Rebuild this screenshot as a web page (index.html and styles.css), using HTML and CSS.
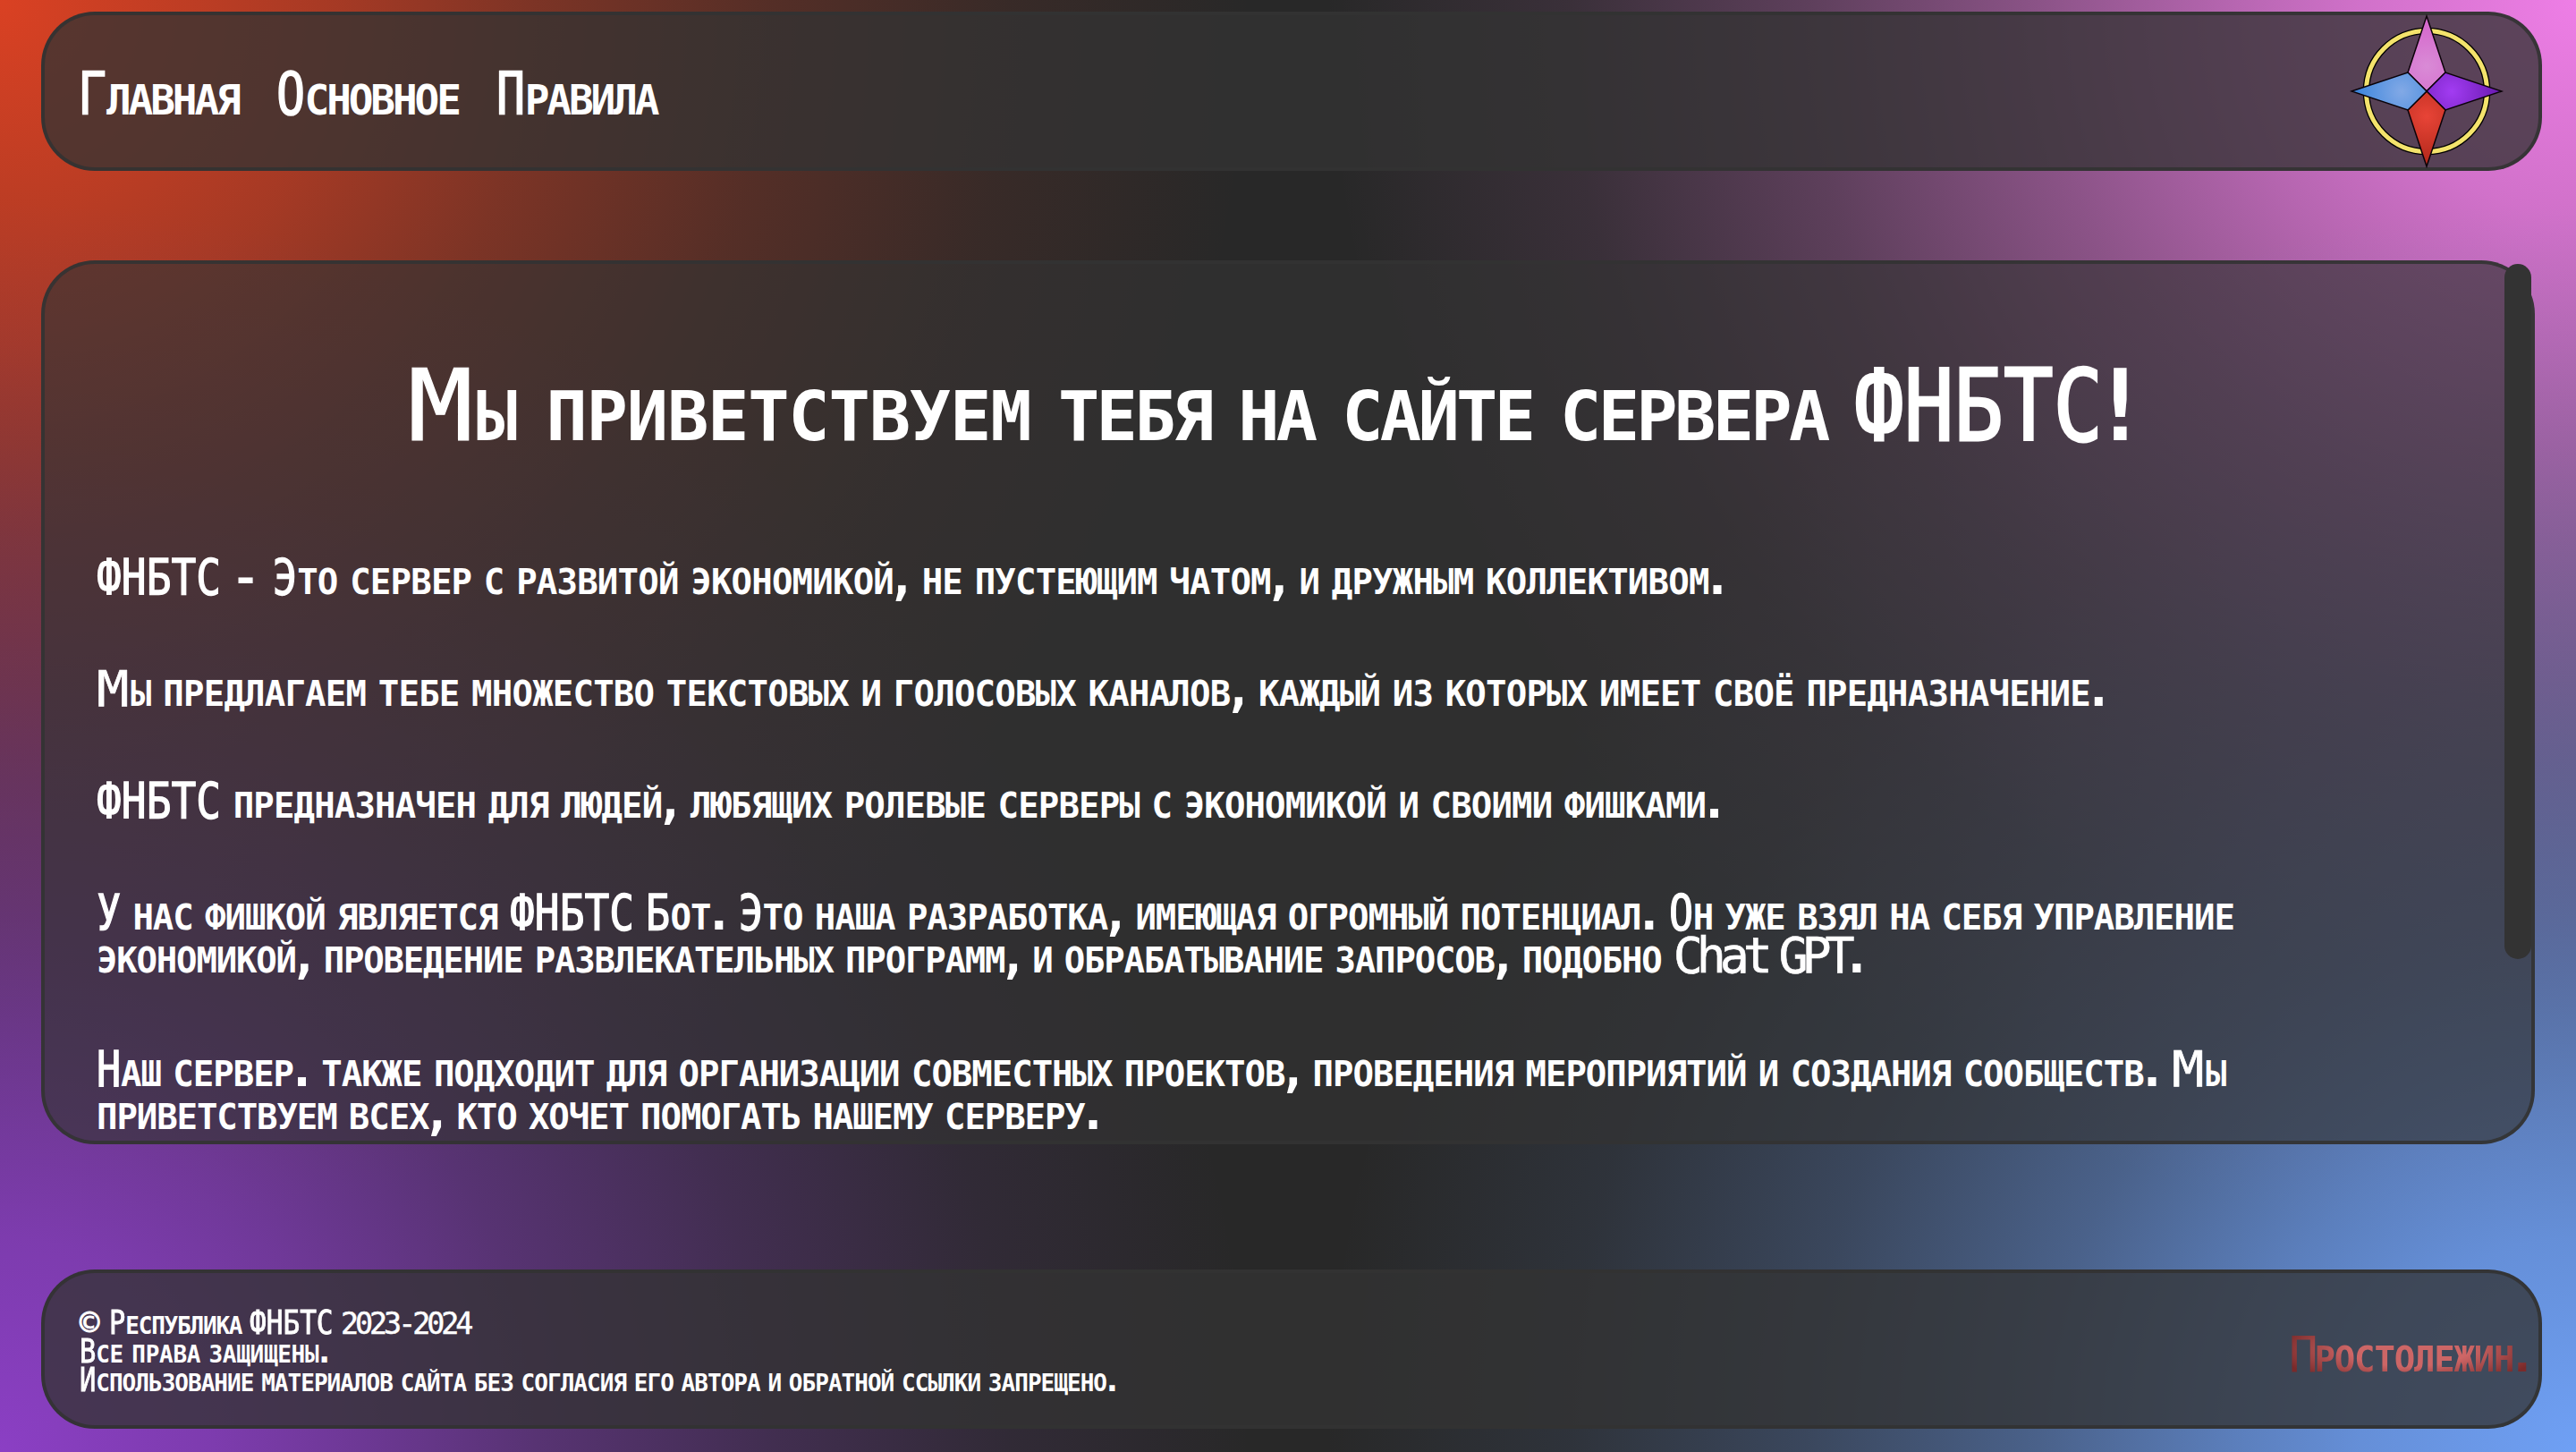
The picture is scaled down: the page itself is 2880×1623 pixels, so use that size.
FILE: index.html
```html
<!DOCTYPE html>
<html lang="ru">
<head>
<meta charset="utf-8">
<title>ФНБТС</title>
<link rel="stylesheet" href="styles.css">
</head>
<body>
<header class="panel header">
  <nav class="nav">
    <a><span class="cap">Г</span>лавная</a>
    <a><span class="cap">О</span>сновное</a>
    <a><span class="cap">П</span>равила</a>
  </nav>
  <svg class="logo" viewBox="-86 -86 172 172">
    <defs>
      <radialGradient id="pink" gradientUnits="userSpaceOnUse" cx="0" cy="-28" r="48"><stop offset="0" stop-color="#d98bd6"/><stop offset="1" stop-color="#d568cc"/></radialGradient>
      <radialGradient id="blue" gradientUnits="userSpaceOnUse" cx="-28" cy="0" r="50"><stop offset="0" stop-color="#82a9e6"/><stop offset="1" stop-color="#3e86dc"/></radialGradient>
      <radialGradient id="violet" gradientUnits="userSpaceOnUse" cx="28" cy="0" r="50"><stop offset="0" stop-color="#a23cf2"/><stop offset="1" stop-color="#6d1cb4"/></radialGradient>
      <radialGradient id="red" gradientUnits="userSpaceOnUse" cx="0" cy="28" r="50"><stop offset="0" stop-color="#e84437"/><stop offset="1" stop-color="#b52a1c"/></radialGradient>
    </defs>
    <circle r="67.5" fill="none" stroke="#000" stroke-width="7.6"/>
    <circle r="67.5" fill="none" stroke="#f4e36c" stroke-width="5"/>
    <g stroke="#0a0208" stroke-width="1.5">
      <path fill="url(#pink)" d="M0-84 21-21 0 0-21-21Z"/>
      <path fill="url(#violet)" d="M84 0 21 21 0 0 21-21Z"/>
      <path fill="url(#red)" d="M0 84-21 21 0 0 21 21Z"/>
      <path fill="url(#blue)" d="M-84 0-21-21 0 0-21 21Z"/>
    </g>
  </svg>
</header>
<main class="panel main">
  <div class="content">
    <h1><span class="lead"><span class="cap wide">М</span>ы приветствуем</span> тебя на сайте сервера <span class="abbr">ФНБТС</span><i>!</i></h1>
    <p><span class="line l1"><span class="abbr">ФНБТС</span> <i class="dash">-</i> <span class="cap">Э</span>то сервер с развитой экономикой<i>,</i> не пустеющим чатом<i>,</i> и дружным коллективом<i>.</i></span></p>
    <p><span class="line l2"><span class="cap wide">М</span>ы предлагаем тебе множество текстовых и голосовых каналов<i>,</i> каждый из которых имеет своё предназначение<i>.</i></span></p>
    <p><span class="line l3"><span class="abbr">ФНБТС</span> предназначен для людей<i>,</i> любящих ролевые серверы с экономикой и своими фишками<i>.</i></span></p>
    <p><span class="line l4"><span class="cap">У</span> нас фишкой является <span class="abbr">ФНБТС</span> <span class="cap">Б</span>от<i>.</i> <span class="cap">Э</span>то наша разработка<i>,</i> имеющая огромный потенциал<i>.</i> <span class="cap">О</span>н уже взял на себя управление</span> <span class="line l5">экономикой<i>,</i> проведение развлекательных программ<i>,</i> и обрабатывание запросов<i>,</i> подобно <span class="latin">Chat GPT</span><i>.</i></span></p>
    <p><span class="line l6"><span class="cap">Н</span>аш сервер<i>.</i> также подходит для организации совместных проектов<i>,</i> проведения мероприятий и создания сообществ<i>.</i> <span class="cap wide">М</span>ы</span> <span class="line l7">приветствуем всех<i>,</i> кто хочет помогать нашему серверу<i>.</i></span></p>
  </div>
  <div class="thumb"></div>
</main>
<footer class="panel footer">
  <div class="legal">
    <div class="line f1"><span class="copy">©</span> <span class="cap">Р</span>еспублика <span class="abbr">ФНБТС</span> <span class="digits">2023-2024</span></div>
    <div class="line"><span class="cap">В</span>се права защищены<i>.</i></div>
    <div class="line f3"><span class="cap">И</span>спользование материалов сайта без согласия его автора и обратной ссылки запрещено<i>.</i></div>
  </div>
  <div class="author"><span>П</span>ростолежин<i>.</i></div>
</footer>
</body>
</html>
```
FILE: styles.css
```css
* { box-sizing: border-box; }
body {
  margin: 0;
  height: 1623px;
  padding: 13px 38px 26px 46px;
  display: flex;
  flex-direction: column;
  overflow: hidden;
  color: #fff;
  font-family: "DejaVu Sans Mono", monospace;
  font-weight: bold;
  font-variant-caps: small-caps;
  background:
    radial-gradient(circle at 0 100%, rgb(139 63 196), rgb(139 63 196 / .86) 240px, rgb(139 63 196 / .72) 380px, rgb(139 63 196 / .48) 600px, rgb(139 63 196 / .26) 860px, rgb(139 63 196 / .09) 1126px, rgb(139 63 196 / 0) 1400px),
    radial-gradient(circle at 100% 100%, rgb(111 160 245), rgb(111 160 245 / .86) 240px, rgb(111 160 245 / .72) 380px, rgb(111 160 245 / .48) 600px, rgb(111 160 245 / .26) 860px, rgb(111 160 245 / .09) 1126px, rgb(111 160 245 / 0) 1400px),
    radial-gradient(circle at 0 0, rgb(218 65 35), rgb(218 65 35 / .82) 240px, rgb(218 65 35 / .7) 380px, rgb(218 65 35 / .47) 600px, rgb(218 65 35 / .25) 860px, rgb(218 65 35 / .09) 1126px, rgb(218 65 35 / 0) 1400px),
    radial-gradient(circle at 100% 0, rgb(238 126 230), rgb(238 126 230 / .85) 240px, rgb(238 126 230 / .72) 380px, rgb(238 126 230 / .5) 600px, rgb(238 126 230 / .27) 860px, rgb(238 126 230 / .09) 1126px, rgb(238 126 230 / 0) 1400px),
    #282828;
}
i { font-style: normal; margin: 0 -.13em; }
.dash { margin: 0 .02em 0 -.05em; font-weight: normal; -webkit-text-stroke: 2px #fff; }
.panel {
  border: 4px solid rgba(51, 51, 51, .9);
  border-radius: 60px;
  background: rgba(51, 51, 51, .77);
  white-space: nowrap;
}
.header, .footer {
  height: 178px;
  flex: none;
  display: flex;
  align-items: center;
  justify-content: space-between;
  padding-left: 37px;
}
.nav { display: flex; gap: 42px; font-size: 65px; padding-top: 7px; letter-spacing: -3.1px; }
.logo { width: 172px; height: 172px; margin-right: 39px; flex: none; }
.cap, .abbr {
  display: inline-block;
  line-height: 1;
  font-weight: normal;
  letter-spacing: 0;
  transform-origin: left;
  -webkit-text-stroke: .025em #fff;
}
.cap { transform: scaleX(.82); margin-right: -.11em; }
.cap.wide { transform: scaleX(1.1); margin-right: .09em; -webkit-text-stroke-width: .01em; }
.abbr { transform: scaleX(.84); margin-right: -.48em; }
.latin { font-variant-caps: normal; font-weight: normal; letter-spacing: -.13em; word-spacing: -.22em; -webkit-text-stroke: .01em #fff; }
.main {
  height: 988px;
  margin: 100px 8px 140px 0;
  flex: none;
  display: flex;
  background: rgba(51, 51, 51, .65);
}
.content { flex: 1; min-width: 0; padding: 95px 0 0 58px; }
h1 {
  margin: 0;
  padding-left: 348px;
  height: 128px;
  font-size: 110px;
  line-height: 128px;
  letter-spacing: -3.7px;
  word-spacing: -.29em;
}
.lead { letter-spacing: -1.2px; }
p { margin: 0 0 75px; font-size: 55px; line-height: 50px; letter-spacing: -.8px; word-spacing: -.34em; }
h1 + p { margin-top: 100px; }
p .line { display: block; height: 50px; }
p .l3 { letter-spacing: -.86px; }
p .l4 { letter-spacing: -1.05px; }
p .l5 { letter-spacing: -1.2px; }
p .l6 { letter-spacing: -1.03px; }
p .l7 { letter-spacing: -1.1px; }
.thumb { width: 30px; height: 777px; border-radius: 15px; background: #333; flex: none; }
.legal { font-size: 37px; line-height: 32px; letter-spacing: -.3px; word-spacing: -.34em; padding-left: 2px; }
.legal .line { height: 32px; }
.legal .f3 { letter-spacing: -.97px; }
.legal .f1 { letter-spacing: -1.2px; }
.copy { font-weight: normal; letter-spacing: .06em; -webkit-text-stroke: 1px #fff; }
.digits { font-weight: normal; font-size: .9em; letter-spacing: -.12em; line-height: 1; -webkit-text-stroke: .5px #fff; }
.author {
  font-size: 55px;
  letter-spacing: -1.2px;
  margin-right: 10px;
  padding-top: 11px;
  background: radial-gradient(ellipse closest-side, #cd6666 0, #cd6666 50%, #7a2a2a 110%);
  -webkit-background-clip: text;
  background-clip: text;
  color: transparent;
}
.author span { font-weight: normal; letter-spacing: -.08em; }
```
